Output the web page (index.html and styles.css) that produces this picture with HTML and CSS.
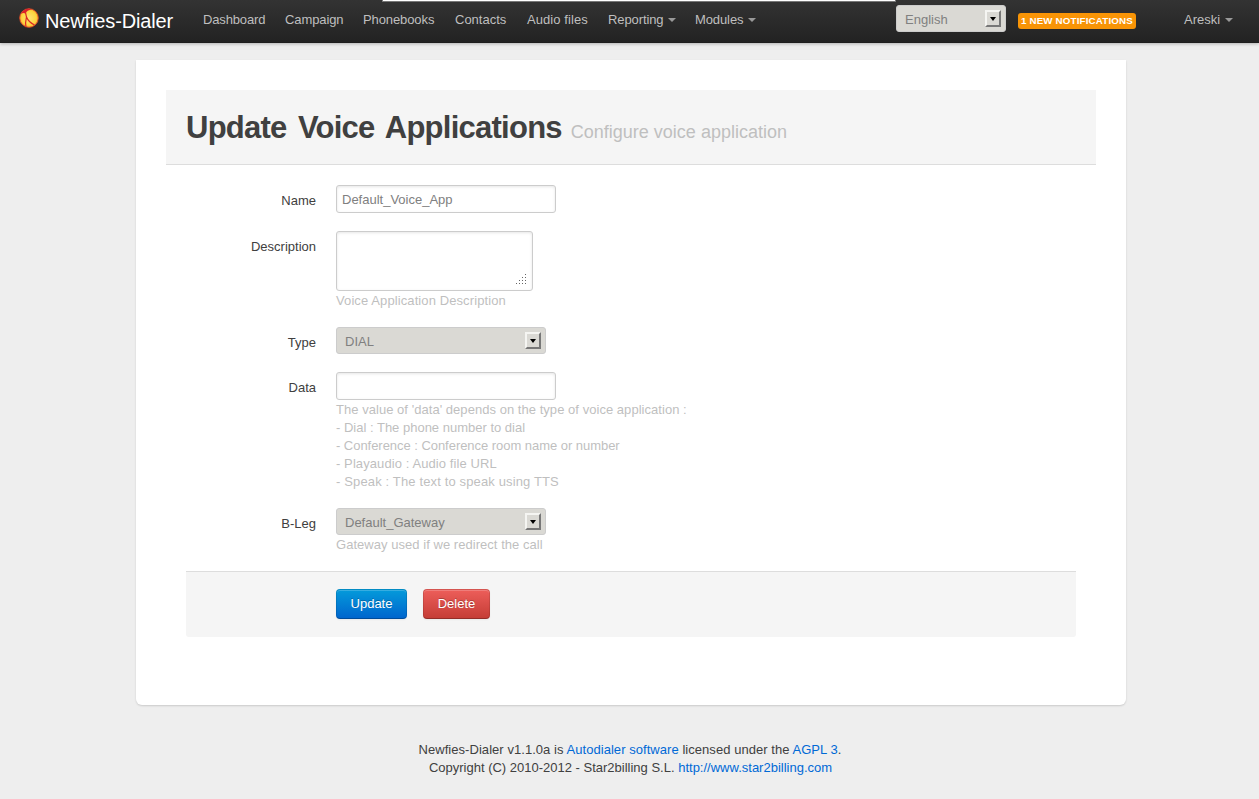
FILE: index.html
```
<!DOCTYPE html>
<html lang="en">
<head>
<meta charset="utf-8">
<title>Newfies-Dialer</title>
<link rel="stylesheet" href="styles.css">
</head>
<body>
<header class="navbar">
  <div class="top-notice"></div>
  <a class="brand"><svg class="logo" viewBox="0 0 20 20"><defs><radialGradient id="ball"><stop offset="0" stop-color="#ffe276"/><stop offset=".75" stop-color="#fdd53f"/><stop offset="1" stop-color="#f8b030"/></radialGradient></defs><circle cx="10" cy="10" r="9.300" fill="url(#ball)" stroke="#dc4428" stroke-width=".9"/><path d="M2 5.500Q5 .7 10 .7L12.500 1.500Q8 2 6.500 5.500Q4.500 4.500 2 5.500Z" fill="#dc1f2b"/><path d="M6.500 4.500Q8 9 7 12T7 19M7.500 9Q9.500 14 15.500 17" fill="none" stroke="#dc2a25" stroke-width="1.200"/></svg><span class="brand-name">Newfies-Dialer</span></a>
  <nav class="nav">
    <a class="dashboard">Dashboard</a><a class="campaign">Campaign</a><a class="phonebooks">Phonebooks</a><a class="contacts">Contacts</a><a class="audio">Audio files</a><a class="reporting">Reporting<i class="caret"></i></a><a class="modules">Modules<i class="caret"></i></a>
  </nav>
  <div class="select language"><span>English</span><i class="arrow"></i></div>
  <span class="label">1 NEW NOTIFICATIONS</span>
  <a class="user">Areski<i class="caret"></i></a>
</header>
<main class="content">
  <div class="page-header"><h1>Update Voice Applications</h1><small>Configure voice application</small></div>
  <form class="form">
    <div class="row"><label for="name">Name</label><div><input id="name" class="input" value="Default_Voice_App"></div></div>
    <div class="row"><label for="description">Description</label><div><div class="textarea-wrap"><textarea id="description" class="input"></textarea><svg class="grip" width="11" height="11"><path d="M9 0h1v1h-1zM6 3h1v1h-1zM9 3h1v1h-1zM3 6h1v1h-1zM6 6h1v1h-1zM9 6h1v1h-1zM0 9h1v1h-1zM3 9h1v1h-1zM6 9h1v1h-1zM9 9h1v1h-1z"/></svg></div><p class="help help-description">Voice Application Description</p></div></div>
    <div class="row"><label>Type</label><div><div class="select"><span>DIAL</span><i class="arrow"></i></div></div></div>
    <div class="row"><label for="data">Data</label><div><input id="data" class="input"><p class="help">The value of 'data' depends on the type of voice application :<br><span class="help-dial">- Dial : The phone number to dial</span><br><span class="help-conference">- Conference : Conference room name or number</span><br><span class="help-playaudio">- Playaudio : Audio file URL</span><br><span class="help-speak">- Speak : The text to speak using TTS</span></p></div></div>
    <div class="row"><label>B-Leg</label><div><div class="select"><span>Default_Gateway</span><i class="arrow"></i></div><p class="help">Gateway used if we redirect the call</p></div></div>
    <div class="actions"><button type="button" class="btn primary">Update</button><button type="button" class="btn danger">Delete</button></div>
  </form>
</main>
<footer class="footer">Newfies-Dialer v1.1.0a is <a>Autodialer software</a> licensed under the <a>AGPL 3</a>.<br><span class="copyright">Copyright (C) 2010-2012 - Star2billing S.L. <a>http://www.star2billing.com</a></span></footer>
</body>
</html>
```
FILE: styles.css
```
* { box-sizing: border-box; }
body { margin: 0; background: #eee; color: #404040; font: 13px/18px "Liberation Sans", Arial, sans-serif; height: 799px; overflow: hidden; }
.navbar { position: relative; display: flex; align-items: flex-start; height: 43px; background: linear-gradient(#333, #222); box-shadow: 0 1px 3px rgba(0,0,0,.25), inset 0 -1px 0 rgba(0,0,0,.1); color: #bfbfbf; }
.top-notice { position: absolute; left: 382px; top: 0; width: 514px; height: 2px; background: #fff; border: solid #777; border-width: 0 1px 1px; }
.brand { display: flex; width: 193px; padding-left: 19px; }
.logo { width: 20px; height: 20px; margin: 8px 6px 0 0; }
.brand-name { color: #fff; font-size: 20px; line-height: 20px; letter-spacing: -.14px; margin-top: 11px; white-space: nowrap; }
.nav { display: flex; width: 703px; }
.nav a { padding: 11px 10px 0; white-space: nowrap; }
.dashboard { width: 82px; letter-spacing: -.15px; }
.campaign { width: 78px; letter-spacing: -.1px; }
.phonebooks { width: 92px; letter-spacing: -.1px; }
.contacts { width: 72px; }
.audio { width: 81px; letter-spacing: .08px; }
.reporting { width: 87px; letter-spacing: -.1px; }
.modules { width: 81px; letter-spacing: -.1px; }
.caret { display: inline-block; margin: 0 0 2px 4.5px; vertical-align: middle; border: 4px solid transparent; border-top-color: #999; border-bottom: 0; }
.select { display: flex; justify-content: space-between; align-items: center; width: 210px; height: 27px; padding: 1px 4px 0 8px; background: #dad9d4; border: 1px solid #ccc; border-radius: 3px; color: #808080; }
.select span { padding-top: 2px; }
.arrow { display: flex; align-items: center; justify-content: center; width: 16px; height: 17px; margin-top: -1px; border: 2px solid; border-color: #f5f5f2 #777 #777 #f5f5f2; }
.arrow::after { content: ""; border: 3px solid transparent; border-top: 4px solid #000; border-bottom: 0; }
.language { width: 110px; margin-top: 5px; }
.label { width: 118px; height: 16px; margin: 13px 48px 0 12px; padding: 0 3px; border-radius: 3px; background: #f89406; color: #fff; font-size: 9.75px; line-height: 16px; font-weight: bold; letter-spacing: .17px; white-space: nowrap; }
.user { padding-top: 11px; white-space: nowrap; }
.content { width: 990px; height: 645px; margin: 17px 0 0 136px; padding: 30px; background: #fff; border-radius: 0 0 6px 6px; box-shadow: 0 1px 2px rgba(0,0,0,.15); }
.page-header { display: flex; align-items: baseline; height: 75px; padding: 20px 20px 0; background: #f5f5f5; border-bottom: 1px solid #ddd; }
.page-header h1 { margin: 0 9px 0 0; font-size: 31px; line-height: 36px; letter-spacing: -.75px; word-spacing: 3.5px; white-space: nowrap; }
.page-header small { font-size: 18px; color: #bfbfbf; white-space: nowrap; }
.form { padding: 20px 20px 0; }
.row { display: grid; grid-template-columns: 130px 1fr; column-gap: 20px; margin-bottom: 18px; }
.row label { padding-top: 7px; text-align: right; }
.input { display: block; width: 220px; height: 28px; padding: 4px 5px; border: 1px solid #ccc; border-radius: 3px; box-shadow: inset 0 1px 3px rgba(0,0,0,.1); background: #fff; color: #808080; font: inherit; resize: none; }
.textarea-wrap { position: relative; width: 197px; }
.textarea-wrap .input { width: 197px; height: 60px; }
.grip { position: absolute; right: 6px; bottom: 6px; fill: #666; }
.help { margin: 1px 0 -1px; color: #bfbfbf; letter-spacing: .04px; }
.help-description { letter-spacing: .1px; }
.help-dial { letter-spacing: 0; }
.help-conference { letter-spacing: -.04px; }
.help-playaudio { letter-spacing: .09px; }
.help-speak { letter-spacing: .14px; }
.actions { display: flex; gap: 16px; height: 66px; padding: 17px 0 0 150px; background: #f5f5f5; border-top: 1px solid #ddd; border-radius: 0 0 3px 3px; }
.btn { height: 30px; padding: 0; border: 1px solid; border-radius: 4px; color: #fff; font: inherit; text-shadow: 0 -1px 0 rgba(0,0,0,.25); box-shadow: inset 0 1px 0 rgba(255,255,255,.2), 0 1px 2px rgba(0,0,0,.05); }
.primary { width: 71px; background: linear-gradient(#049cdb, #0064cd) border-box; border-color: rgba(0,0,0,.1) rgba(0,0,0,.1) rgba(0,0,0,.25); }
.danger { width: 67px; background: linear-gradient(#ee5f5b, #c43c35) border-box; border-color: rgba(0,0,0,.1) rgba(0,0,0,.1) rgba(0,0,0,.25); }
.footer { width: 990px; margin: 36px 0 0 135px; text-align: center; letter-spacing: .05px; }
.footer a { color: #0069d6; }
.copyright { padding-left: 1px; letter-spacing: 0; }
```
